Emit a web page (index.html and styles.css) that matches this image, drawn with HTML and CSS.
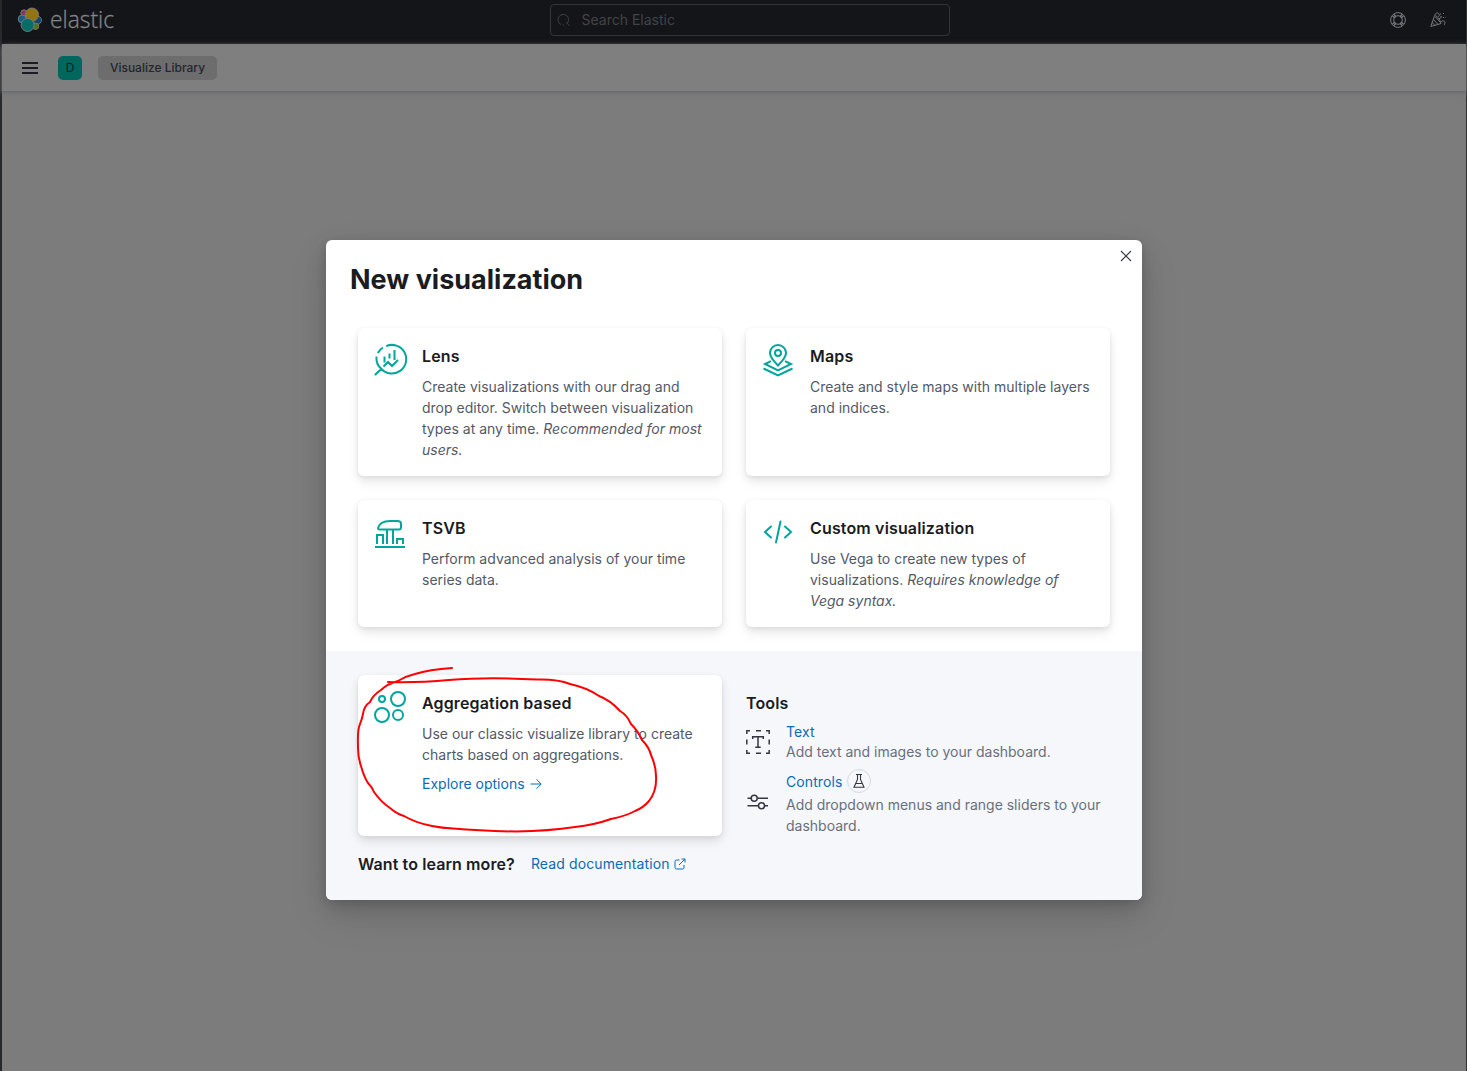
FILE: index.html
```html
<!DOCTYPE html>
<html lang="en">
<head>
<meta charset="utf-8">
<title>Visualize Library - Elastic</title>
<link rel="stylesheet" href="styles.css">
</head>
<body>
<div class="app">
  <header class="topbar">
    <div class="brand">
      <svg class="brand-mark" width="26" height="26" viewBox="0 0 26 26" stroke="#7c7c7c" stroke-width=".9">
        <circle cx="7" cy="6" r="3.2" fill="#85365a"/>
        <circle cx="5.2" cy="12" r="4" fill="#185d88"/>
        <circle cx="20.3" cy="13.2" r="4.2" fill="#104474"/>
        <circle cx="18.5" cy="19.3" r="3.2" fill="#507214"/>
        <circle cx="15" cy="7.6" r="6.6" fill="#957212"/>
        <circle cx="10.6" cy="18" r="6.500" fill="#076d67"/>
      </svg>
      <svg class="brand-name" width="80" height="36"><text x="1" y="26" textLength="64" lengthAdjust="spacingAndGlyphs">elastic</text></svg>
    </div>
    <div class="search">
      <svg width="16" height="16" viewBox="0 0 16 16" fill="none" stroke="#3f4043"><path d="M5 12.500A5.300 5.300 0 1 1 11 11.500M6.500 13h1.500M10.500 10.500l3 3.500"/></svg>
      <span>Search Elastic</span>
    </div>
    <div class="top-actions">
      <svg width="16" height="16" viewBox="0 0 16 16" fill="none" stroke="#777a7e"><circle cx="8" cy="8" r="7.4"/><circle cx="8" cy="8" r="4.3"/><path stroke-width="1.4" d="M2.5 4 5 6M4 2.5 6 5M12 2.5 10 5M13.500 4 11 6M2.500 12 5 10M4 13.500 6 11M12 13.500 10 11M13.500 12 11 10"/></svg>
      <svg width="16" height="16" viewBox="0 0 16 16" fill="none" stroke="#77797d"><path d="M.8 14.500 4.600 3.500Q9 4.500 11 11.500ZM3.500 7.500 8 12.500M2.300 10.500 5 13.500M5.500 5l4.500 5M5 3c0-2 3-3 4-1s-1 3-1 3M9 7l3-2.500M11 10c1-2 4-1 4 0s-1 3 0 3"/><path stroke-dasharray="1 1.500" d="M10.500 1.500v3M13 5.500h3M13 1.500h2"/></svg>
    </div>
  </header>
  <nav class="subbar">
    <svg width="16" height="12" viewBox="0 0 16 12" stroke="#1b1c22" stroke-width="2"><path d="M0 1h16M0 6h16M0 11h16"/></svg>
    <span class="space">D</span>
    <span class="crumb">Visualize Library</span>
  </nav>
  <main class="page"></main>
</div>

<div class="overlay">
  <section class="modal">
    <svg class="close" width="12" height="12" viewBox="0 0 12 12" stroke="#343741" stroke-width="1.100"><path d="M1 1l10 10M11 1 1 11"/></svg>
    <h1>New visualization</h1>
    <div class="grid main-grid">
      <article class="card">
        <svg class="icon" viewBox="0 0 32 32"><path d="M12.200 2.100A14.300 14.300 0 1 1 7.500 25L.8 31M7.500 25A14.300 14.300 0 0 1 2.500 12.500M3.800 9A14.300 14.300 0 0 1 9 3.500M10.500 12.500v6M15.500 9.500v5M20.500 6v10M9.500 22.500l4.500-4.500 4 4 6-6"/></svg>
        <div><h2>Lens</h2><p>Create visualizations with our drag and drop editor. Switch between visualization types at any time. <em>Recommended for most users.</em></p></div>
      </article>
      <article class="card">
        <svg class="icon" viewBox="0 0 32 32"><path d="M16 21.500C12 17.500 8 13.500 8 9a8 8 0 0 1 16 0c0 4.500-4 8.500-8 12.500z"/><circle cx="16" cy="9" r="3"/><path d="M9 17.200 3 20l13 6.500L29 20l-6-2.800M1.500 24.500 16 31.500l14.500-7"/></svg>
        <div><h2>Maps</h2><p>Create and style maps with multiple layers and indices.</p></div>
      </article>
      <article class="card">
        <svg class="icon" viewBox="0 0 32 32"><path d="M1 31h30M3 28v-9h6v9M13 28V14M19 28V14M23 28v-5h6v5M6 13.500h19a2 2 0 0 0 2-2V7.500Q27 5 23.500 5H16Q6 5 4 12q0 1.500 2 1.500z"/></svg>
        <div><h2>TSVB</h2><p>Perform advanced analysis of your time series data.</p></div>
      </article>
      <article class="card">
        <svg class="icon" viewBox="0 0 32 32"><path stroke-linecap="round" d="M9 10.500 3 16l6 5.500M23 10.500l6 5.500-6 5.500M18.500 5.500l-4.500 21"/></svg>
        <div><h2>Custom visualization</h2><p>Use Vega to create new types of visualizations. <em>Requires knowledge of Vega syntax.</em></p></div>
      </article>
    </div>
    <footer class="modal-footer">
      <div class="grid">
        <article class="card agg">
          <svg class="icon" viewBox="0 0 32 32"><circle cx="8" cy="8" r="3"/><circle cx="24" cy="8" r="7"/><circle cx="8" cy="24" r="7"/><circle cx="24" cy="24" r="5"/></svg>
          <div><h2>Aggregation based</h2><p>Use our classic visualize library to create charts based on aggregations.</p>
          <a class="explore">Explore options <svg width="12" height="12" viewBox="0 0 12 12"><path d="M.5 6h10.500M6.500 1.300 11.200 6l-4.700 4.700"/></svg></a></div>
        </article>
        <div class="tools">
          <h2>Tools</h2>
          <div class="tool">
            <svg width="24" height="24" viewBox="0 0 24 24"><path d="M.8 4V.8H4M10 .8h5M20 .8h3.200V4M23.200 9.500v5M23.200 20v3.200H20M15 23.200h-5M4 23.200H.8V20M.8 14.500v-5M6.700 9V6.700h10.600V9M12 6.700v10.600M9.300 17.300h5.400"/></svg>
            <div><a>Text</a><p>Add text and images to your dashboard.</p></div>
          </div>
          <div class="tool controls">
            <svg width="24" height="24" viewBox="0 0 24 24"><path d="M1.500 8.300H5M11.500 8.300H22M1.500 15.700H12M18.500 15.700H22"/><circle cx="8.200" cy="8.300" r="3"/><circle cx="15.500" cy="15.700" r="3"/></svg>
            <div><div class="link-row"><a>Controls</a><span class="beta"><svg width="12" height="16" viewBox="0 0 12 16"><path d="M3 1.500h6M4.500 1.500v5L1 14.300h10L7.500 6.500v-5M3 10.500h6"/></svg></span></div>
            <p>Add dropdown menus and range sliders to your dashboard.</p></div>
          </div>
        </div>
      </div>
      <div class="learn"><strong>Want to learn more?</strong><a>Read documentation <svg width="12" height="12" viewBox="0 0 12 12"><path d="M5.500 2H2.500Q1 2 1 3.500v6Q1 11 2.500 11h6Q10 11 10 9.500V7M7.500 1H11v3.500M11 1 5 7"/></svg></a></div>
    </footer>
  </section>
</div>
<svg class="scribble" width="302" height="168" viewBox="0 0 302 168"><path d="M96 3Q73 4.500 59 9Q50 11 42 16Q31 19 25 25Q17 30 14 37Q8 41 7 49Q6 54 4 59C1 65 2 76 2 83Q2 93 5 101Q8 112 12 118Q16 122 18 127Q25 137 34 143Q41 149 48 151Q60 158 76 161Q86 163 97 163.500Q125 166 160 166.500Q193 166 219 162Q238 160 255 154Q270 151 279 146Q287 143 293 136Q301 126 300 111Q300 101 295 90Q293 82 286 75Q282 66 275 59Q271 50 264 46Q254 35 243 31Q232 23 214 19Q202 14 181 14.500Q131 12 93 15Q60 18 32 17"/></svg>
</body>
</html>
```

FILE: styles.css
```css
* { box-sizing: border-box; }
body {
  margin: 0;
  height: 1071px;
  overflow: hidden;
  font: 14px/21px Inter, "Liberation Sans", sans-serif;
  color: #535966;
}
h1, h2, p { margin: 0; }
svg { display: block; flex: none; fill: none; }
.app {
  height: 1071px;
  display: flex;
  flex-direction: column;
  border-left: 2px solid #28292b;
  border-right: 1px solid #303133;
  background: #7c7c7c;
}
.topbar {
  height: 44px;
  display: grid;
  grid-template-columns: 1fr 400px 1fr;
  align-items: center;
  padding: 0 20px 4px 15px;
  background: #131519;
}
.brand { display: flex; align-items: center; gap: 6px; }
.brand-name text { font: 300 23px "Open Sans", sans-serif; fill: #858585; stroke: #858585; stroke-width: .3; }
.search {
  display: flex;
  align-items: center;
  gap: 10px;
  width: 400px;
  height: 32px;
  margin-left: 18px;
  padding-left: 5px;
  border: 1px solid #343539;
  border-radius: 4px;
  color: #434447;
}
.search span { position: relative; top: -1px; }
.top-actions { display: flex; gap: 24px; justify-content: flex-end; }
.subbar {
  height: 47px;
  display: flex;
  align-items: center;
  padding: 1px 0 0 20px;
  background: #7f7f7f;
  box-shadow: 0 1px 2px #66676b, 0 2px 6px #707174;
}
.space {
  width: 24px;
  margin: 0 16px 0 20px;
  border-radius: 5px;
  background: #00675f;
  color: #051f1d;
  font-size: 12px;
  line-height: 24px;
  text-align: center;
}
.crumb {
  width: 119px;
  border-radius: 5px;
  background: #6d6d6e;
  color: #24262c;
  font-size: 12px;
  font-weight: 500;
  line-height: 24px;
  text-align: center;
}
.page { flex: 1; }
.overlay {
  position: absolute;
  inset: 0;
  display: flex;
  align-items: flex-start;
  justify-content: center;
  padding: 240px 0 0 1px;
}
.modal {
  position: relative;
  width: 816px;
  height: 660px;
  display: flex;
  flex-direction: column;
  border-radius: 6px;
  background: #fff;
  box-shadow: 0 3px 10px rgba(0,0,0,.11), 0 8px 22px rgba(0,0,0,.12), 0 16px 40px rgba(0,0,0,.1);
}
.close { position: absolute; top: 10px; right: 10px; }
h1 {
  padding: 24px 24px 32px;
  font-size: 27px;
  line-height: 32px;
  font-weight: 700;
  color: #1a1c21;
}
h2 {
  font-size: 16px;
  line-height: 24px;
  font-weight: 600;
  letter-spacing: .15px;
  color: #1a1c21;
}
.grid { display: grid; grid-template-columns: 364px 364px; gap: 24px; padding: 0 32px; }
.main-grid { padding-bottom: 24px; }
.card {
  display: flex;
  gap: 16px;
  padding: 16px;
  border-radius: 6px;
  background: #fff;
  box-shadow: 0 1px 4px rgba(0,0,0,.06), 0 4px 8px rgba(0,0,0,.07), 0 7px 14px rgba(0,0,0,.05);
}
.card p { margin-top: 8px; }
.icon { width: 32px; height: 32px; overflow: visible; stroke: #00a69b; stroke-width: 2; }
.modal-footer {
  flex: 1;
  padding-top: 24px;
  background: #f5f7fb;
  border-radius: 0 0 6px 6px;
}
.agg { height: 161px; }
a { color: #0b6bb8; }
a svg { stroke: currentColor; }
.explore { display: flex; align-items: center; gap: 5px; margin-top: 8px; }
.tools { padding-top: 16px; }
.tool { display: flex; align-items: center; gap: 16px; height: 39px; margin-top: 7px; color: #69707d; }
.tool > svg, .beta svg { stroke: #343741; stroke-width: 1.5; }
.tool a { display: block; line-height: 19px; letter-spacing: .1px; }
.controls { height: 68px; margin-top: 7px; }
.link-row { display: flex; align-items: center; gap: 4px; height: 26px; }
.beta {
  width: 24px;
  height: 24px;
  display: grid;
  place-items: center;
  border: 1px solid #d3dae6;
  border-radius: 50%;
}
.beta svg { stroke-width: 1.1; }
.learn { display: flex; align-items: center; gap: 16px; padding: 16px 32px; line-height: 24px; }
.learn strong { font-size: 16px; font-weight: 600; letter-spacing: .1px; color: #1a1c21; }
.learn a { display: flex; align-items: center; gap: 4px; letter-spacing: .12px; }
.scribble { position: absolute; left: 356px; top: 665px; stroke: #f00; stroke-width: 2; stroke-linecap: round; stroke-linejoin: round; }
```
